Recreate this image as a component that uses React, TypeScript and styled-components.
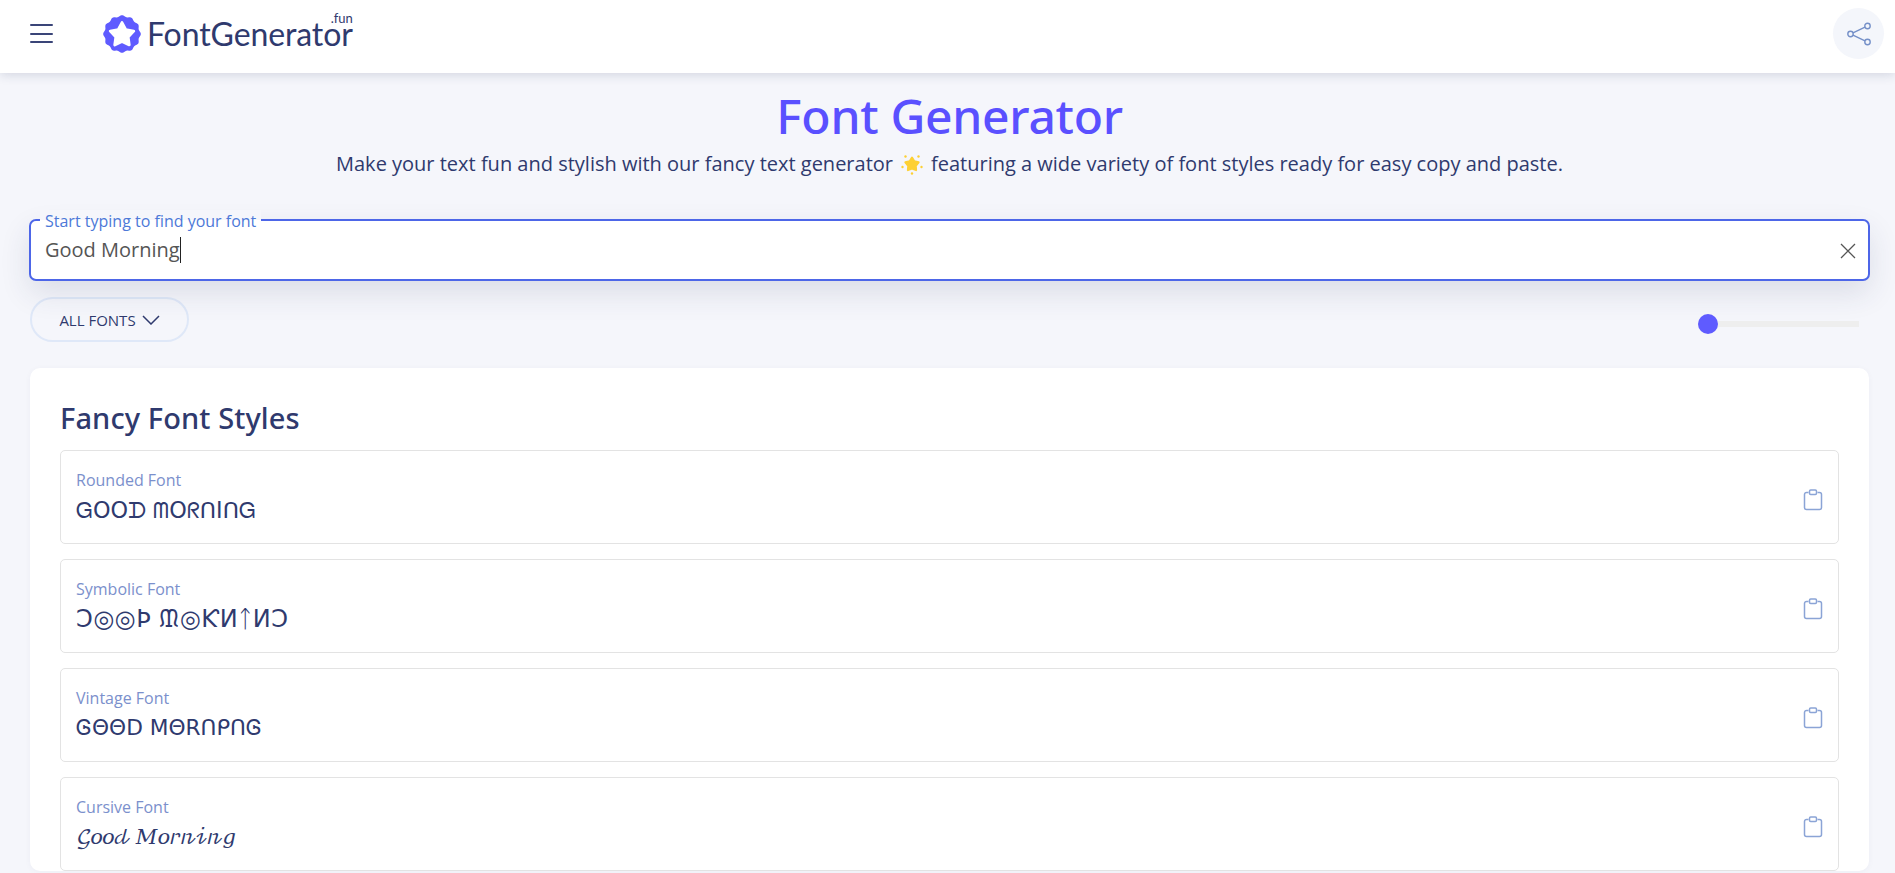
import React from "react";
import styled, { createGlobalStyle } from "styled-components";

const Global = createGlobalStyle`
  html, body { margin: 0; padding: 0; height: 873px; overflow: hidden; background: #f5f6fb; }
  * { box-sizing: border-box; }
  body { font-family: "Open Sans", "Noto Sans", sans-serif; color: #2f3a6e; }
`;

const Page = styled.div`
  display: flex;
  flex-direction: column;
  width: 1895px;
`;

const Header = styled.header`
  position: relative;
  z-index: 2;
  height: 73px;
  flex: none;
  display: flex;
  align-items: center;
  padding: 0 11px 6px 30px;
  background: #fff;
  box-shadow: 0 2px 10px rgba(40, 50, 90, 0.16);
`;

const MenuButton = styled.button`
  display: flex;
  flex-direction: column;
  justify-content: space-between;
  width: 23px;
  height: 19px;
  padding: 0;
  margin-right: 50px;
  border: none;
  background: none;
`;

const MenuLine = styled.span`
  display: block;
  height: 2px;
  background: #3a4578;
  border-radius: 1px;
`;

const Logo = styled.div`
  display: flex;
  align-items: center;
  gap: 6px;
`;

const LogoWord = styled.span`
  position: relative;
  font-family: "Lato", sans-serif;
  font-size: 32px;
  font-weight: 400;
  line-height: 40px;
  color: #2f3a6e;
  letter-spacing: -0.1px;
`;

const LogoTld = styled.span`
  position: absolute;
  right: 0;
  top: -3px;
  font-size: 13px;
  line-height: 14px;
  letter-spacing: 0;
`;

const ShareButton = styled.button`
  margin-left: auto;
  width: 51px;
  height: 51px;
  display: flex;
  align-items: center;
  justify-content: center;
  padding: 0;
  border: none;
  border-radius: 50%;
  background: #f4f6fb;
`;

const Hero = styled.section`
  display: flex;
  flex-direction: column;
  align-items: center;
  padding: 11px 0 0 4px;
`;

const Title = styled.h1`
  margin: 0 0 1px;
  font-family: "Noto Sans", sans-serif;
  font-size: 48px;
  font-weight: 500;
  line-height: 64px;
  color: #5a50ff;
  letter-spacing: -0.3px;
`;

const Subtitle = styled.p`
  margin: 0;
  display: flex;
  align-items: center;
  gap: 8px;
  font-size: 20px;
  line-height: 30px;
  color: #2f3a6e;
`;

const SearchWrap = styled.div`
  padding: 0 25px 0 29px;
  margin-top: 40px;
`;

const SearchField = styled.div`
  position: relative;
  height: 62px;
  border: 2px solid #4d66e8;
  border-radius: 7px;
  background: #fff;
  box-shadow: 0 12px 30px rgba(40, 50, 90, 0.12);
`;

const SearchLegend = styled.div`
  position: absolute;
  left: 9px;
  top: -11px;
  padding: 0 5px;
  background: linear-gradient(to bottom, #f5f6fb 0, #f5f6fb 10px, #fff 10px);
  font-size: 16px;
  line-height: 22px;
  color: #4d79d8;
`;

const SearchValue = styled.div`
  display: flex;
  align-items: center;
  height: 100%;
  padding: 0 14px;
  font-size: 20px;
  line-height: 28px;
  color: #555;
`;

const Caret = styled.span`
  display: inline-block;
  width: 1px;
  height: 26px;
  background: #222;
`;

const ClearIcon = styled.svg`
  position: absolute;
  right: 12px;
  top: 22px;
`;

const Controls = styled.div`
  display: flex;
  align-items: center;
  justify-content: space-between;
  padding: 16px 36px 0 30px;
`;

const FilterChip = styled.button`
  display: flex;
  align-items: center;
  justify-content: center;
  gap: 6px;
  width: 159px;
  height: 45px;
  padding: 0;
  border: 2px solid #dfe8f8;
  border-radius: 23px;
  background: transparent;
  font-family: "Open Sans", sans-serif;
  font-size: 15px;
  color: #2f3a6e;
`;

const Slider = styled.div`
  position: relative;
  width: 161px;
  height: 6px;
  margin-top: 8px;
  background: #eeeeee;
`;

const SliderThumb = styled.span`
  position: absolute;
  left: 0;
  top: -7px;
  width: 20px;
  height: 20px;
  border-radius: 50%;
  background: #5f5bff;
`;

const Card = styled.section`
  margin: 26px 26px 0 30px;
  padding: 30px 30px 0;
  background: #fff;
  border-radius: 10px;
  box-shadow: 0 1px 6px rgba(40, 50, 90, 0.04);
`;

const CardTitle = styled.h2`
  margin: 0 0 13px;
  font-family: "Noto Sans", sans-serif;
  font-size: 29px;
  font-weight: 500;
  line-height: 39px;
  letter-spacing: 0.1px;
  color: #2f3a6e;
`;

const RowList = styled.div`
  display: flex;
  flex-direction: column;
  gap: 15px;
`;

const Row = styled.article`
  position: relative;
  height: 94px;
  padding: 18px 15px 0;
  border: 1.5px solid #e3e3e3;
  border-radius: 5px;
  background: #fff;
`;

const RowLabel = styled.div`
  font-size: 16px;
  line-height: 22px;
  color: #7b90cc;
`;

const RowSample = styled.div<{ $size: number; $spacing: number }>`
  margin-top: 4px;
  font-size: ${(p) => p.$size}px;
  letter-spacing: ${(p) => p.$spacing}px;
  line-height: 30px;
  color: #2f3a6e;
  font-family: "DejaVu Sans", "DejaVu Math TeX Gyre", "Noto Sans", sans-serif;
  white-space: nowrap;
`;

const CopyIcon = styled.svg`
  position: absolute;
  right: 15px;
  top: 38px;
`;

const rows = [
  { label: "Rounded Font", sample: "ᏀOOᗪ ᗰOᖇᑎIᑎᏀ", size: 22.3, spacing: 0 },
  { label: "Symbolic Font", sample: "Ↄ◎◎Þ ᙢ◎ƘИᛏИↃ", size: 24, spacing: 0.5 },
  { label: "Vintage Font", sample: "ᎶΘΘD MΘRᑎᑭᑎᎶ", size: 21.7, spacing: 0 },
  { label: "Cursive Font", sample: "𝒢𝑜𝑜𝒹 𝑀𝑜𝓇𝓃𝒾𝓃𝑔", size: 21, spacing: -2.4 },
];

const badge = (() => {
  const pts: string[] = [];
  const n = 180;
  for (let i = 0; i < n; i++) {
    const a = (i / n) * Math.PI * 2;
    const r = 19 + 0.8 * Math.cos(a * 12);
    pts.push(`${(20 + r * Math.sin(a)).toFixed(2)},${(20 - r * Math.cos(a)).toFixed(2)}`);
  }
  return pts.join(" ");
})();

const star = (cx: number, cy: number, R: number, r: number) => {
  const pts: string[] = [];
  for (let i = 0; i < 10; i++) {
    const a = (i / 10) * Math.PI * 2;
    const q = i % 2 ? r : R;
    pts.push(`${(cx + q * Math.sin(a)).toFixed(2)},${(cy - q * Math.cos(a)).toFixed(2)}`);
  }
  return pts.join(" ");
};

const LogoMark = () => (
  <svg width="38" height="38" viewBox="0 0 40 40">
    <polygon points={badge} fill="#5f5bff" />
    <polygon
      points={star(20, 21, 13, 6.8)}
      fill="#fff"
      stroke="#fff"
      strokeWidth="3"
      strokeLinejoin="round"
    />
  </svg>
);

const Sun = () => (
  <svg width="22" height="22" viewBox="0 0 22 22">
    <polygon
      points={star(11, 11.5, 7, 4)}
      fill="#fdd034"
      stroke="#fdd034"
      strokeWidth="2"
      strokeLinejoin="round"
    />
    <g fill="#fdd034">
      <circle cx="4.5" cy="3.5" r="1.2" />
      <circle cx="17.5" cy="3.5" r="1.2" />
      <circle cx="1.5" cy="14" r="1.2" />
      <circle cx="20.5" cy="14" r="1.2" />
      <circle cx="11" cy="20.5" r="1.2" />
    </g>
  </svg>
);

export default function App() {
  return (
    <Page>
      <Global />
      <Header>
        <MenuButton aria-label="Menu">
          <MenuLine />
          <MenuLine />
          <MenuLine />
        </MenuButton>
        <Logo>
          <LogoMark />
          <LogoWord>
            FontGenerator
            <LogoTld>.fun</LogoTld>
          </LogoWord>
        </Logo>
        <ShareButton aria-label="Share">
          <svg width="24" height="24" viewBox="0 0 24 24" fill="none" stroke="#7590c8" strokeWidth="1.4">
            <circle cx="3.5" cy="12" r="2.7" />
            <circle cx="20.5" cy="4" r="2.7" />
            <circle cx="20.5" cy="20" r="2.7" />
            <path d="M6 10.8L18 5.2M6 13.2l12 5.6" />
          </svg>
        </ShareButton>
      </Header>
      <Hero>
        <Title>Font Generator</Title>
        <Subtitle>
          <span>Make your text fun and stylish with our fancy text generator</span>
          <Sun />
          <span>featuring a wide variety of font styles ready for easy copy and paste.</span>
        </Subtitle>
      </Hero>
      <SearchWrap>
        <SearchField>
          <SearchLegend>Start typing to find your font</SearchLegend>
          <SearchValue>
            Good Morning
            <Caret />
          </SearchValue>
          <ClearIcon width="16" height="16" viewBox="0 0 16 16" fill="none" stroke="#555" strokeWidth="1.3">
            <path d="M1 1l14 14M15 1L1 15" />
          </ClearIcon>
        </SearchField>
      </SearchWrap>
      <Controls>
        <FilterChip>
          ALL FONTS
          <svg width="18" height="10" viewBox="0 0 18 10" fill="none" stroke="#2f3a6e" strokeWidth="1.5">
            <path d="M1 1l8 8 8-8" />
          </svg>
        </FilterChip>
        <Slider>
          <SliderThumb />
        </Slider>
      </Controls>
      <Card>
        <CardTitle>Fancy Font Styles</CardTitle>
        <RowList>
          {rows.map((r) => (
            <Row key={r.label}>
              <RowLabel>{r.label}</RowLabel>
              <RowSample $size={r.size} $spacing={r.spacing}>
                {r.sample}
              </RowSample>
              <CopyIcon width="20" height="22" viewBox="0 0 20 22" fill="none" stroke="#8ba4d6" strokeWidth="1.5">
                <path d="M5.5 3.5H3.5a2 2 0 0 0-2 2v13a2 2 0 0 0 2 2h13a2 2 0 0 0 2-2v-13a2 2 0 0 0-2-2h-2" />
                <rect x="6.5" y="1" width="7" height="4.5" rx="1.2" />
              </CopyIcon>
            </Row>
          ))}
        </RowList>
      </Card>
    </Page>
  );
}
